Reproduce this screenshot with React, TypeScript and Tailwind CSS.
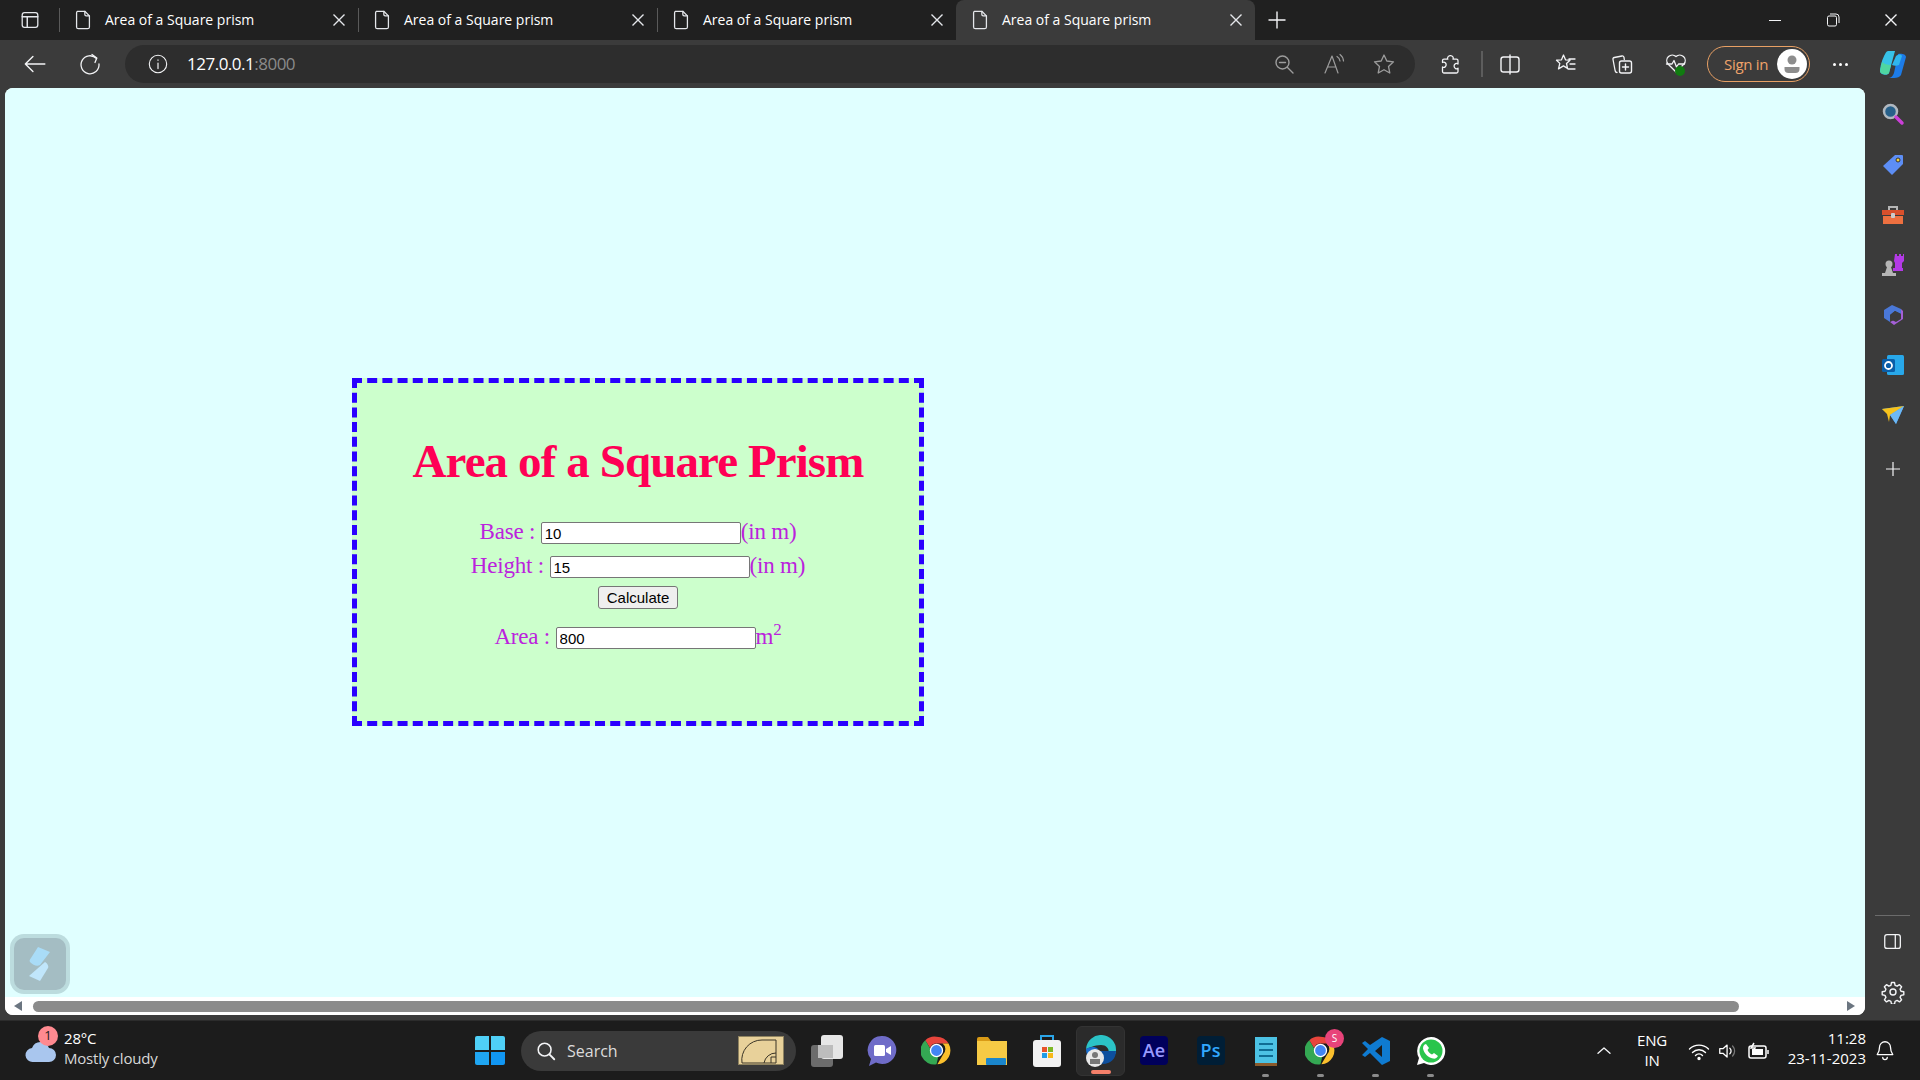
import type { ReactNode } from "react";

const tabs = [0, 1, 2, 3];
const sansClass = "[font-family:'Open_Sans','Noto_Sans',sans-serif]";
const arialClass = "[font-family:'Liberation_Sans',Arial,sans-serif]";

function Ico({ size = 24, children, className = "" }: { size?: number; children: ReactNode; className?: string }) {
  return (
    <svg width={size} height={size} viewBox="0 0 24 24" fill="none" stroke="currentColor" strokeWidth="1.4" strokeLinecap="round" strokeLinejoin="round" className={className}>
      {children}
    </svg>
  );
}

function PageIcon() {
  return (
    <Ico size={22} className="text-gray-200">
      <path d="M6 2.5h8l5 5v12a2 2 0 0 1-2 2H7a2 2 0 0 1-2-2v-15a2 2 0 0 1 1-2z" />
      <path d="M14 2.5v3.5a1.5 1.5 0 0 0 1.5 1.5H19" />
    </Ico>
  );
}

function CloseIcon({ size = 14 }: { size?: number }) {
  return (
    <svg width={size} height={size} viewBox="0 0 14 14" stroke="currentColor" strokeWidth="1.4" fill="none">
      <path d="M1.5 1.5l11 11M12.5 1.5l-11 11" />
    </svg>
  );
}

function Tab({ active, hideSep }: { active: boolean; hideSep: boolean }) {
  return (
    <div className={`relative flex h-10 w-[299px] items-center pl-[13px] ${active ? "rounded-t-lg bg-[#3b3b3b]" : ""}`}>
      {!hideSep && <div className="absolute left-0 top-[8px] h-6 w-px bg-[#5a5a5a]" />}
      <div className="flex w-[33px] items-center"><PageIcon /></div>
      <span className="w-[227px] text-[14px] leading-none text-white">Area of a Square prism</span>
      <span className="text-gray-200"><CloseIcon /></span>
    </div>
  );
}

function TabBar() {
  return (
    <div className={`flex h-10 shrink-0 items-center bg-[#202020] ${sansClass}`}>
      <div className="flex w-[59px] justify-center text-gray-200">
        <Ico size={22}>
          <rect x="3.5" y="4" width="17" height="16" rx="2.5" />
          <path d="M3.5 8.5h17M9 8.5V20" strokeWidth="1.6" />
        </Ico>
      </div>
      {tabs.map((t) => (
        <Tab key={t} active={t === 3} hideSep={t === 3} />
      ))}
      <div className="ml-[12px] text-gray-100">
        <svg width="20" height="20" viewBox="0 0 20 20" stroke="currentColor" strokeWidth="1.4"><path d="M10 1.5v17M1.5 10h17" /></svg>
      </div>
      <div className="ml-auto flex items-center text-gray-100">
        <div className="flex w-[58px] justify-center"><div className="h-px w-3 bg-gray-100" /></div>
        <div className="flex w-[58px] justify-center">
          <svg width="14" height="14" viewBox="0 0 14 14" fill="none" stroke="currentColor"><rect x="1.5" y="3" width="9" height="10" rx="1.5" /><path d="M4 1h6a3 3 0 0 1 3 3v6" /></svg>
        </div>
        <div className="flex w-[58px] justify-center"><CloseIcon /></div>
      </div>
    </div>
  );
}

function SignIn() {
  return (
    <div className="flex h-[36px] w-[103px] items-center justify-between rounded-full border border-[#e8a064] pl-[16px] pr-[2px]">
      <span className="text-[15px] tracking-[-0.3px] text-[#f0a36a]">Sign in</span>
      <div className="flex h-[30px] w-[30px] items-center justify-center rounded-full bg-white">
        <svg width="22" height="22" viewBox="0 0 22 22" fill="#8d8d8d"><circle cx="11" cy="7" r="4.5" /><path d="M3.5 14h15v2a4 4 0 0 1-4 4h-7a4 4 0 0 1-4-4z" /></svg>
      </div>
    </div>
  );
}

function Toolbar() {
  return (
    <div className={`flex h-12 shrink-0 items-center bg-[#3b3b3b] text-gray-100 ${sansClass}`}>
      <div className="ml-[21px] w-[57px]">
        <Ico size={26}><path d="M22 12H4M11 5l-7 7 7 7" strokeWidth="1.3" /></Ico>
      </div>
      <div className="w-[47px]">
        <Ico size={24}><path d="M18.5 6.5A9 9 0 1 0 21 12" strokeWidth="1.3" /><path d="M14 2.5l4.800 3.500-1.800 4.500" strokeWidth="1.3" /></Ico>
      </div>
      <div className="flex h-[38px] w-[1290px] items-center rounded-full bg-[#2d2d2d] pl-[22px] pr-[19px]">
        <Ico size={22}><circle cx="12" cy="12" r="9.500" strokeWidth="1.2" /><path d="M12 11v6M12 7.500v.5" strokeWidth="1.3" /></Ico>
        <span className="ml-[18px] text-[17px] tracking-[-0.5px] text-white">127.0.0.1<span className="text-[#8a8a8a]">:8000</span></span>
        <div className="ml-auto flex items-center gap-[26px] text-[#9c9c9c]">
          <Ico size={24}><circle cx="10.500" cy="10.500" r="6.500" /><path d="M7.500 10.500h6M15.500 15.500l5.500 5.500" /></Ico>
          <Ico size={24}><path d="M3 21L10 4l6 17M5.500 15h8.500M15 4.500a6 6 0 0 1 3 4.500M18 2.500a9 9 0 0 1 3.500 6.500" strokeWidth="1.2" /></Ico>
          <Ico size={24}><path d="M12 3l2.800 6 6.700.8-5 4.600 1.300 6.600L12 17.700 6.200 21l1.300-6.600-5-4.600L9.200 9z" strokeWidth="1.3" /></Ico>
        </div>
      </div>
      <div className="ml-[23px] w-[43px]">
        <Ico size={24}><path d="M9.500 6a3 3 0 0 1 5.500-1c.5 1 .3 1.500 0 2.200h3.500A1.500 1.500 0 0 1 20 8.700V12c-.8-.6-1.600-.8-2.400-.4a2.800 2.800 0 0 0 0 5c.8.400 1.600.2 2.400-.4v3.300a1.500 1.500 0 0 1-1.500 1.500H6A1.500 1.500 0 0 1 4.500 19.500V15c1 .5 2 .5 2.800-.3a2.800 2.800 0 0 0 0-4C6.500 10 5.500 10 4.500 10.500V8.700A1.500 1.500 0 0 1 6 7.200h3.800c-.2-.4-.3-.8-.3-1.200z" strokeWidth="1.300" /></Ico>
      </div>
      <div className="h-[26px] w-[2px] bg-[#5d5d5d]" />
      <div className="ml-[15px] w-[56px]">
        <Ico size={24}><rect x="3" y="5" width="18" height="15" rx="2.500" /><path d="M12 3v19" /></Ico>
      </div>
      <div className="w-[56px]">
        <Ico size={24}><path d="M9.500 3l2 4.800 4.500.4-3.500 3.200 1 5-4-2.500-5 3 1.300-5.500L2.500 8.200l5-.4zM15 7h6M16 12h5M14 17h7" strokeWidth="1.300" /></Ico>
      </div>
      <div className="w-[54px]">
        <Ico size={24}><path d="M7 20.500c-1 0-1.500-.5-1.800-1.500L3 7.500c-.2-1 .3-1.800 1.300-2L12 4c1-.2 1.800.3 2 1.300l.3 2.200" strokeWidth="1.300" /><rect x="9.500" y="9" width="12" height="12" rx="2" /><path d="M15.500 12v6M12.500 15h6" /></Ico>
      </div>
      <div className="relative w-[31px]">
        <Ico size={24}><path d="M12 20l-8-8a5.500 5.500 0 0 1 8-7.500A5.500 5.500 0 0 1 20 12l-3 3" strokeWidth="1.300" /><path d="M2.500 12H8l2-3.500 2.500 6.500 2-3h6" strokeWidth="1.300" /></Ico>
        <div className="absolute left-[11px] top-[14px] h-[10px] w-[10px] rounded-full bg-[#107c10]" />
      </div>
      <div className="ml-[12px]"><SignIn /></div>
      <div className="ml-[23px] flex w-[30px] gap-[3px]">
        <div className="h-[3px] w-[3px] rounded-full bg-white" />
        <div className="h-[3px] w-[3px] rounded-full bg-white" />
        <div className="h-[3px] w-[3px] rounded-full bg-white" />
      </div>
      <div className="ml-[14px]">
        <svg width="32" height="32" viewBox="0 0 32 32">
          <path d="M11 3h7l-6 22c-1 3-9 2-9-2 0-6 5-20 8-20z" fill="#37c2e8" />
          <path d="M5 14c2 2 5 3 9 3l-2 8c-1 2-9 2-9-2z" fill="#4fd6a0" />
          <path d="M21 6c3-1 8 0 8 3l-5 18c-1 2-4 3-7 3h-6c3 0 5-2 6-5z" fill="#1d7ce8" />
          <path d="M19 8c3-2 5-2 6 0l-3 9c-2 1-5 1-7 0z" fill="#2fb6ee" />
        </svg>
      </div>
    </div>
  );
}

function Field({ label, value, unit }: { label: string; value: string; unit: ReactNode }) {
  return (
    <div className="flex items-center justify-center whitespace-pre text-[23px] tracking-[-0.2px] text-[#bb22dd]">
      <span className="pb-[2px]">{label} : </span>
      <input
        readOnly
        value={value}
        className={`h-[22px] w-[200px] rounded-[2px] border border-[#767676] bg-white px-[3px] pt-[2px] text-[15px] tracking-normal text-black outline-none ${arialClass}`}
      />
      <span className="pb-[2px]">{unit}</span>
    </div>
  );
}

function Card() {
  return (
    <div className="ml-[347px] mt-[290px] flex h-[348px] w-[572px] flex-col border-[5px] border-dashed border-[#2a00ff] bg-[#ccffcc] pt-[51px] [font-family:'Liberation_Serif','Times_New_Roman',serif]">
      <h1 className="text-center text-[47px] font-bold leading-[55px] tracking-[-0.9px] text-[#ff0055]">Area of a Square Prism</h1>
      <div className="mt-[26px] flex flex-col">
        <div className="h-[34px]"><Field label="Base" value="10" unit="(in m)" /></div>
        <div className="h-[34px]"><Field label="Height" value="15" unit="(in m)" /></div>
        <div className="flex h-[28px] items-center justify-center">
          <button className={`h-[23px] w-[80px] rounded-[3px] border border-[#767676] bg-[#efefef] text-[15px] leading-none text-black ${arialClass}`}>Calculate</button>
        </div>
        <div className="mt-[9px] h-[34px]">
          <Field label="Area" value="800" unit={<>m<sup className="top-[-9px] align-baseline text-[17px] leading-none">2</sup></>} />
        </div>
      </div>
    </div>
  );
}

function Page() {
  return (
    <div className="relative mb-[5px] ml-[5px] flex flex-1 flex-col overflow-hidden rounded-lg bg-white">
      <div className="flex-1 bg-[#e0ffff]"><Card /></div>
      {/* floating widget */}
      <div className="absolute bottom-[21px] left-[5px] flex h-[60px] w-[60px] items-center justify-center rounded-[14px] bg-[#bcdcde]">
        <div className="flex h-[52px] w-[52px] items-center justify-center rounded-[10px] bg-[#a4bdc3]">
          <svg width="30" height="36" viewBox="0 0 30 36">
            <path d="M13 1l12 5-10 13c-3 2-7 0-10-3-1-1 0-3 1-4z" fill="#a9dcf7" />
            <path d="M20 16c2 1 4 4 3 6L15 35 4 30z" fill="#c0e6fb" />
          </svg>
        </div>
      </div>
      {/* horizontal scrollbar */}
      <div className="flex h-[18px] shrink-0 items-end bg-white pb-[3px]">
        <div className="mb-[1px] ml-[9px] h-0 w-0 border-y-[5px] border-r-[8px] border-y-transparent border-r-[#6b7580]" />
        <div className="ml-[11px] h-[11px] w-[1706px] rounded-full bg-[#8b8b8b]" />
        <div className="mb-[1px] ml-auto mr-[10px] h-0 w-0 border-y-[5px] border-l-[8px] border-y-transparent border-l-[#6b7580]" />
      </div>
    </div>
  );
}

function Sidebar() {
  return (
    <div className="flex w-[55px] shrink-0 flex-col items-center bg-[#3b3b3b] pt-[1px] text-gray-100">
      <div className="flex h-[50px] items-center">
        <svg width="24" height="24" viewBox="0 0 24 24"><circle cx="9.500" cy="9.500" r="6.500" fill="#27608a" stroke="#b0b8c0" strokeWidth="2.500" /><path d="M15 15l6 6" stroke="#cb3fd8" strokeWidth="3.500" strokeLinecap="round" /></svg>
      </div>
      <div className="flex h-[51px] items-center">
        <svg width="24" height="24" viewBox="0 0 24 24"><path d="M14 2h7a1 1 0 0 1 1 1v8L11 22 2 13z" fill="#5d8ef5" /><circle cx="17" cy="7" r="2" fill="#f5d33b" stroke="#333" /></svg>
      </div>
      <div className="flex h-[50px] items-center">
        <svg width="24" height="24" viewBox="0 0 24 24"><path d="M8 7V4h8v3" fill="none" stroke="#b5b5b5" strokeWidth="2" /><path d="M1 7h22v5H1z" fill="#d9502c" /><path d="M2 13h20v8H2z" fill="#ed7040" /><rect x="10" y="10" width="4" height="5" rx="1" fill="#ccc" /></svg>
      </div>
      <div className="flex h-[49px] items-center">
        <svg width="24" height="24" viewBox="0 0 24 24"><path d="M14 1h2v2h2V1h2v2h2V1h1v7l-2 2v5h1v3h-10v-3h2v-5l-1-2z" fill="#b33ae6" /><circle cx="8" cy="11" r="3.500" fill="#b5b5b5" /><path d="M6 14h4l2 6H4zM1 20h14v3H1z" fill="#b5b5b5" /></svg>
      </div>
      <div className="flex h-[51px] items-center">
        <svg width="24" height="24" viewBox="0 0 24 24" fill="none"><path d="M3 7l8-5 9 4v5l-6-3-5 4v7l-6-4z" fill="#4a78d8" /><path d="M20 6l2 2v8l-9 6-4-3 6-3 5-3z" fill="#a45fd6" /><path d="M9 12l5-4 6 3v5l-5 3-6-3z" fill="#3b3b3b" /></svg>
      </div>
      <div className="flex h-[50px] items-center">
        <svg width="24" height="24" viewBox="0 0 24 24"><rect x="6" y="2" width="17" height="20" rx="1.500" fill="#28a8ea" /><rect x="1" y="6" width="13" height="13" rx="1.500" fill="#0a5ea8" /><circle cx="7.500" cy="12.500" r="3.500" fill="none" stroke="#fff" strokeWidth="1.800" /></svg>
      </div>
      <div className="flex h-[50px] items-center">
        <svg width="24" height="20" viewBox="0 0 24 20"><path d="M1 4l22-3-8 18-6-9z" fill="#3f9bf0" /><path d="M1 4l22-3L9 10l-1 7-2-8z" fill="#f6c21c" /><path d="M23 1L9 10l6 9z" fill="#6db8f5" /></svg>
      </div>
      <div className="mt-[11px] flex h-[36px] items-center">
        <svg width="16" height="16" viewBox="0 0 16 16" stroke="currentColor" strokeWidth="1.200"><path d="M8 1v14M1 8h14" /></svg>
      </div>
      <div className="mt-auto h-px w-[35px] bg-[#6b6b6b]" />
      <div className="mt-[15px]">
        <Ico size={22}><rect x="3" y="4" width="17" height="15" rx="2.500" /><path d="M14.500 4v15" /></Ico>
      </div>
      <div className="mb-[16px] mt-[27px]">
        <Ico size={24}><circle cx="12" cy="12" r="3" /><path d="M10.500 2.500h3l.6 2.800 2 .9 2.400-1.500 2.100 2.100-1.500 2.400.9 2 2.800.6v3l-2.800.6-.9 2 1.500 2.400-2.100 2.100-2.400-1.500-2 .9-.6 2.800h-3l-.6-2.800-2-.9-2.400 1.500-2.100-2.100 1.500-2.400-.9-2-2.800-.6v-3l2.800-.6.9-2-1.500-2.400 2.100-2.100 2.400 1.500 2-.9z" /></Ico>
      </div>
    </div>
  );
}

function Chrome({ size = 36 }: { size?: number }) {
  return (
    <svg width={size} height={size} viewBox="0 0 36 36">
      <path d="M18 2a16 16 0 0 1 14 8H18a8 8 0 0 0-7.500 5L5 6a16 16 0 0 1 13-4z" fill="#e8453c" />
      <path d="M32 10a16 16 0 0 1-13 24l7-12a8 8 0 0 0-1-12z" fill="#fbc02d" />
      <path d="M5 6l7 12a8 8 0 0 0 8 7.500L18 34A16 16 0 0 1 5 6z" fill="#34a853" />
      <circle cx="18" cy="18" r="7" fill="#4285f4" stroke="#fff" strokeWidth="1.500" />
    </svg>
  );
}

function Dock({ dot, className = "w-[55px]", children }: { dot?: boolean; className?: string; children: ReactNode }) {
  return (
    <div className={`relative flex h-[50px] items-center justify-center ${className}`}>
      {children}
      {dot && <div className="absolute bottom-[-1px] h-[3px] w-[7px] rounded-full bg-[#8b8b8b]" />}
    </div>
  );
}

function Taskbar() {
  return (
    <div className={`flex h-[60px] shrink-0 items-center border-t border-[#2c2c2c] bg-[#1c1c1c] text-white ${sansClass}`}>
      {/* weather */}
      <div className="relative flex w-[475px] items-center pl-[64px]">
        <svg className="absolute left-[24px] top-[10px]" width="34" height="26" viewBox="0 0 34 26"><path d="M9 24a7 7 0 0 1-1-14 9 9 0 0 1 17 0 7 7 0 0 1 0 14z" fill="#a9c6ee" /></svg>
        <div className="absolute left-[38px] top-[-2px] flex h-[20px] w-[20px] items-center justify-center rounded-full bg-[#ff8a90] text-[13px] text-[#222]">1</div>
        <div className="pb-[5px] text-[15px] leading-[20px] tracking-[-0.2px]">
          <div>28°C</div>
          <div className="text-[#d8d8d8]">Mostly cloudy</div>
        </div>
      </div>
      {/* start */}
      <div className="grid h-[29px] w-[30px] grid-cols-2 gap-[2px]">
        <div className="rounded-tl-[2px] bg-[#4fd0f7]" />
        <div className="rounded-tr-[2px] bg-[#4fd0f7]" />
        <div className="rounded-bl-[2px] bg-[#1fa6f2]" />
        <div className="rounded-br-[2px] bg-[#1196f2]" />
      </div>
      {/* search */}
      <div className="ml-[16px] flex h-10 w-[275px] items-center rounded-full bg-[#3a3a3a] pl-[14px] pr-[12px]">
        <Ico size={22} className="text-gray-100"><circle cx="10.500" cy="10.500" r="7" strokeWidth="1.700" /><path d="M16 16l5 5" strokeWidth="2" /></Ico>
        <span className="ml-[10px] text-[16px] text-[#dcdcdc]">Search</span>
        <div className="ml-auto h-[29px] w-[46px] border border-[#8f8360] bg-[#e8d19a]">
          <svg width="44" height="27" viewBox="0 0 44 27" fill="none" stroke="#3a3426"><path d="M3 26a20 20 0 0 1 20-23h14v23zM25 26a12 12 0 0 1 12-10M32 26v-6h5" /></svg>
        </div>
      </div>
      {/* pinned apps */}
      <div className="ml-[3px] flex items-center">
        <Dock>
          <div className="relative h-[32px] w-[32px]">
            <div className="absolute bottom-0 left-0 h-[22px] w-[22px] rounded-[3px] bg-[#6c6c6c]" />
            <div className="absolute right-0 top-0 h-[24px] w-[22px] rounded-[3px] bg-[#e6e6e6]" />
            <div className="absolute left-[7px] top-[10px] h-[13px] w-[15px] bg-[#bdbdbd]" />
          </div>
        </Dock>
        <Dock>
          <svg width="30" height="32" viewBox="0 0 30 32"><path d="M15 1a14 14 0 1 1-6 26.500L2 31l2-7A14 14 0 0 1 15 1z" fill="#6f6cc8" /><rect x="7" y="10" width="11" height="11" rx="1.500" fill="#fff" /><path d="M19 14l5-3v9l-5-3z" fill="#fff" /></svg>
        </Dock>
        <Dock><Chrome size={31} /></Dock>
        <Dock>
          <svg width="32" height="30" viewBox="0 0 32 30"><path d="M1 3a2 2 0 0 1 2-2h9l3 4h-14z" fill="#d99a16" /><path d="M1 5h30v24H1z" fill="#f6ca45" /><rect x="10" y="22" width="20" height="7" rx="1" fill="#1a86cc" /></svg>
        </Dock>
        <Dock>
          <svg width="30" height="34" viewBox="0 0 30 34"><path d="M9 7V2h12v5" fill="none" stroke="#2aa5e8" strokeWidth="2" /><rect x="1" y="6" width="28" height="27" rx="3" fill="#f2f2f2" /><rect x="10" y="13" width="5" height="5" fill="#e8542a" /><rect x="16" y="13" width="5" height="5" fill="#7db825" /><rect x="10" y="19" width="5" height="5" fill="#1e9ce8" /><rect x="16" y="19" width="5" height="5" fill="#f7b818" /></svg>
        </Dock>
        <div className="relative ml-[2px] flex h-[50px] w-[49px] items-center justify-center rounded-md border border-[#333] bg-[#2b2b2b]">
          <svg width="32" height="32" viewBox="0 0 32 32"><path d="M1 14a15 15 0 0 1 30 2c0 5-5 6-8 4 2-4 0-10-7-10-7 0-12 3-15 4z" fill="#2bc3c6" /><path d="M1 14c3-2 9-3 12 0-4 3-3 12 5 15A15 15 0 0 1 1 14z" fill="#1a6fcf" /><path d="M14 16h17c0 8-6 13-13 13-4-4-6-9-4-13z" fill="#0d4f9e" /></svg>
          <div className="absolute bottom-[8px] left-[9px] flex h-[18px] w-[18px] items-center justify-center rounded-full bg-[#e8e8e8]">
            <svg width="12" height="14" viewBox="0 0 12 14" fill="#777"><circle cx="6" cy="4" r="3" /><path d="M1 8h10v5H1z" /></svg>
          </div>
          <div className="absolute bottom-[1px] h-[4px] w-[20px] rounded-full bg-[#f5806a]" />
        </div>
        <Dock className="w-[58px]">
          <div className="flex h-[29px] w-[28px] items-center justify-center rounded-[4px] bg-[#00005b] text-[18px] font-semibold text-[#9a9aff]">Ae</div>
        </Dock>
        <Dock>
          <div className="flex h-[29px] w-[28px] items-center justify-center rounded-[4px] bg-[#001e36] text-[18px] font-semibold text-[#31a8ff]">Ps</div>
        </Dock>
        <Dock dot>
          <svg width="24" height="32" viewBox="0 0 24 32"><rect x="1" y="2" width="22" height="28" fill="#4cc2e4" /><rect x="1" y="28" width="22" height="3" fill="#8a5a2c" /><path d="M5 9h14M5 15h14M5 21h14" stroke="#0f6d94" strokeWidth="2" /></svg>
        </Dock>
        <Dock dot>
          <Chrome size={31} />
          <div className="absolute right-[4px] top-[3px] flex h-[19px] w-[19px] items-center justify-center rounded-full bg-[#e8437a] text-[10px] text-white">S</div>
        </Dock>
        <Dock dot>
          <svg width="30" height="30" viewBox="0 0 30 30" fill="#0f7bd1"><path d="M21 1l8 4v20l-8 4-12-12-5 4-3-2 6-6-6-6 3-2 5 4zM21 9l-7 6 7 6z" fillRule="evenodd" /></svg>
        </Dock>
        <Dock dot>
          <svg width="32" height="32" viewBox="0 0 32 32"><path d="M16 2a14 14 0 1 1-7 26L2 30l2-7A14 14 0 0 1 16 2z" fill="#fff" /><circle cx="16" cy="16" r="11.500" fill="#29c54c" /><path d="M11 9l3 4-1.500 2c1 2 2.500 3.500 4.500 4.500l2-1.500 4 3c-1 2-3 3-5 2.500-5-1-9-5-10-10C8 11 9 9.500 11 9z" fill="#fff" /></svg>
        </Dock>
      </div>
      {/* system tray */}
      <div className="ml-auto flex items-center">
        <Ico size={18} className="text-gray-100"><path d="M4 15l8-7 8 7" strokeWidth="1.800" /></Ico>
        <div className="ml-[23px] w-[32px] pb-[2px] text-center text-[15px] leading-[20px] tracking-[-0.2px]">
          <div>ENG</div>
          <div>IN</div>
        </div>
        <div className="ml-[19px]">
          <Ico size={24}><path d="M2.500 10a13.500 13.500 0 0 1 19 0M5.500 13.500a9 9 0 0 1 13 0M8.500 16.500a5 5 0 0 1 7 0" strokeWidth="1.400" /><circle cx="12" cy="19.500" r="1" fill="currentColor" /></Ico>
        </div>
        <div className="ml-[6px]">
          <Ico size={22}><path d="M3 9.500v5h3.500L11 18.500v-13L6.500 9.500z" /><path d="M14 9a4 4 0 0 1 0 6" /><path d="M17 6.500a8 8 0 0 1 0 11" stroke="#777" /></Ico>
        </div>
        <div className="ml-[9px]">
          <svg width="22" height="18" viewBox="0 0 22 18" fill="none" stroke="currentColor" strokeWidth="1.500"><rect x="1" y="4" width="17" height="12" rx="2" /><rect x="4" y="7" width="11" height="6" fill="#fff" stroke="none" /><path d="M20 8v4" /><path d="M6 1L3 6h4L5 10" /></svg>
        </div>
        <div className="ml-[8px] w-[88px] whitespace-nowrap pb-[5px] text-right text-[15px] leading-[20px]">
          <div>11:28</div>
          <div>23-11-2023</div>
        </div>
        <div className="mb-[2px] ml-[8px] mr-[24px]">
          <Ico size={22}><path d="M12 3a6 6 0 0 0-6 6c0 4-1 6-2.500 8h17C19 15 18 13 18 9a6 6 0 0 0-6-6z" /><path d="M9.500 20a2.500 2.500 0 0 0 5 0" /></Ico>
        </div>
      </div>
    </div>
  );
}

export default function App() {
  return (
    <div className="flex h-screen w-full flex-col overflow-hidden bg-[#3b3b3b]">
      <TabBar />
      <Toolbar />
      <div className="flex min-h-0 flex-1">
        <Page />
        <Sidebar />
      </div>
      <Taskbar />
    </div>
  );
}
